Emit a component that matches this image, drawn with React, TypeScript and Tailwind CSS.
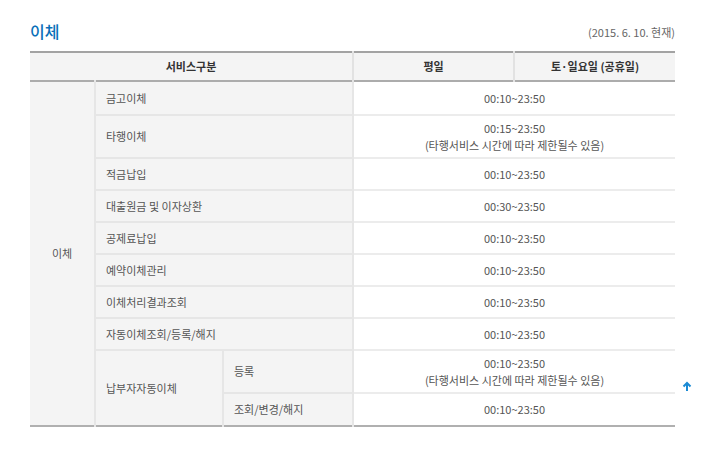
const FONT = { fontFamily: '"Noto Sans CJK KR", "Noto Sans", sans-serif' }

const rows: { name: string; time: string; note?: boolean }[] = [
  { name: '금고이체', time: '00:10~23:50' },
  { name: '타행이체', time: '00:15~23:50', note: true },
  { name: '적금납입', time: '00:10~23:50' },
  { name: '대출원금 및 이자상환', time: '00:30~23:50' },
  { name: '공제료납입', time: '00:10~23:50' },
  { name: '예약이체관리', time: '00:10~23:50' },
  { name: '이체처리결과조회', time: '00:10~23:50' },
  { name: '자동이체조회/등록/해지', time: '00:10~23:50' },
]

const NOTE = '(타행서비스 시간에 따라 제한될수 있음)'

function TimeCell({ time, note }: { time: string; note?: boolean }) {
  return (
    <td colSpan={2} className="bg-white text-center text-[11px] leading-[17px] text-[#555] border-b-2 border-[#ececec]">
      <div>{time}</div>
      {note && <div>{NOTE}</div>}
    </td>
  )
}

export default function App() {
  return (
    <div className="w-[720px] h-[457px] bg-white relative" style={FONT}>
      <div className="pl-[30px] pr-[45px] pt-[20px]">
        <div className="flex items-center justify-between h-[22px]">
          <h2 className="text-[16px] leading-[22px] font-medium text-[#0a6fb8]">이체</h2>
          <span className="text-[11px] leading-[16px] text-[#666] mt-[1px]">(2015. 6. 10. 현재)</span>
        </div>
        <table className="mt-[9px] w-[645px] table-fixed border-collapse border-t-2 border-b-2 border-t-[#a3a3a3] border-b-[#b0b0b0]">
          <colgroup>
            <col className="w-[65px]" />
            <col className="w-[128px]" />
            <col className="w-[130px]" />
            <col className="w-[161px]" />
            <col className="w-[161px]" />
          </colgroup>
          <thead>
            <tr className="h-[29px] bg-[#f4f4f4] border-b-2 border-[#acacac]">
              <th colSpan={3} className="text-[11px] font-bold text-[#333] border-r-2 border-[#e2e2e2]">서비스구분</th>
              <th className="text-[11px] font-bold text-[#333] border-r-2 border-[#e2e2e2]">평일</th>
              <th className="text-[11px] font-bold text-[#333]">토·일요일 (공휴일)</th>
            </tr>
          </thead>
          <tbody>
            {rows.map((r, i) => (
              <tr key={r.name} className={r.note ? 'h-[43px]' : i === 0 ? 'h-[34px]' : 'h-[32px]'}>
                {i === 0 && (
                  <td rowSpan={10} className="bg-[#f4f4f4] text-center text-[11px] text-[#555] border-r-2 border-[#e6e6e6]">이체</td>
                )}
                <td colSpan={2} className="bg-[#f4f4f4] pl-[10px] text-[11px] text-[#555] border-r-2 border-b-2 border-[#e6e6e6]">{r.name}</td>
                <TimeCell time={r.time} note={r.note} />
              </tr>
            ))}
            <tr className="h-[43px]">
              <td rowSpan={2} className="bg-[#f4f4f4] pl-[10px] text-[11px] text-[#555] border-r-2 border-[#e6e6e6]">납부자자동이체</td>
              <td className="bg-[#f4f4f4] pl-[10px] text-[11px] text-[#555] border-r-2 border-b-2 border-[#e6e6e6]">등록</td>
              <TimeCell time="00:10~23:50" note />
            </tr>
            <tr className="h-[33px]">
              <td className="bg-[#f4f4f4] pl-[10px] text-[11px] text-[#555] border-r-2 border-[#e6e6e6]">조회/변경/해지</td>
              <td colSpan={2} className="bg-white text-center text-[11px] text-[#555]">00:10~23:50</td>
            </tr>
          </tbody>
        </table>
      </div>
      <svg className="absolute left-[682px] top-[381px]" width="10" height="11" viewBox="0 0 10 11" fill="none">
        <path d="M5 10V2M1.5 5.5L5 2l3.5 3.5" stroke="#1a8ad4" strokeWidth="2" />
      </svg>
    </div>
  )
}
